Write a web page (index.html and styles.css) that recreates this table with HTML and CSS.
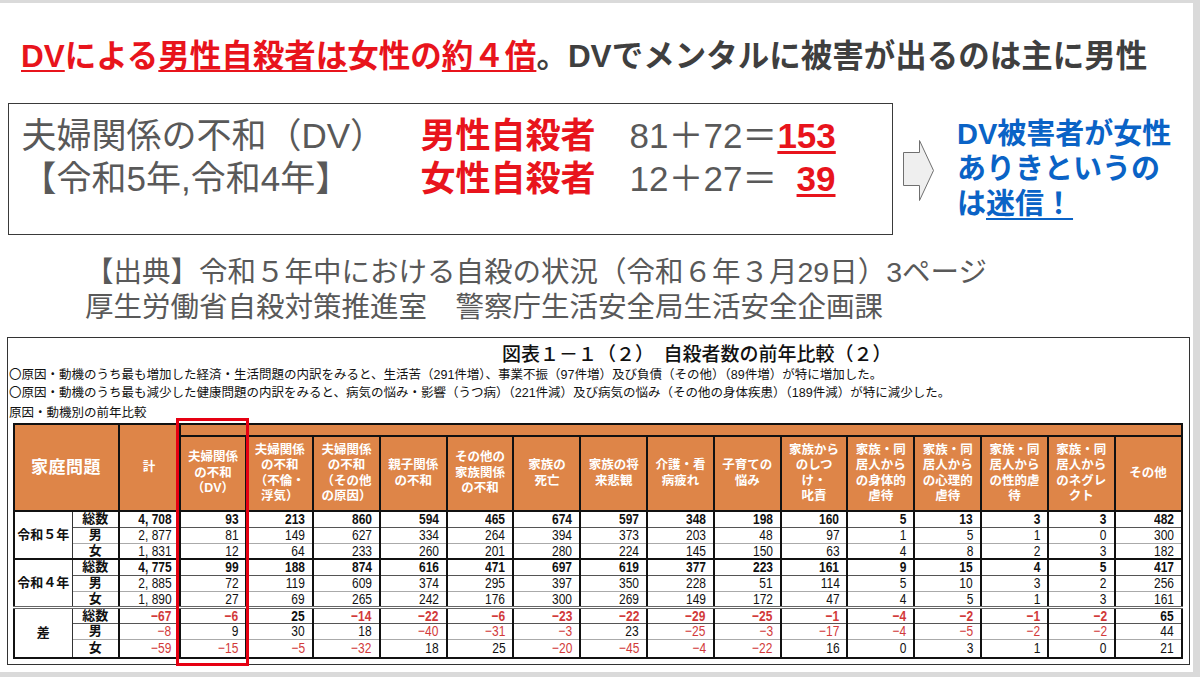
FILE: index.html
```html
<!DOCTYPE html>
<html lang="ja">
<head>
<meta charset="utf-8">
<title>DVによる男性自殺者</title>
<link rel="stylesheet" href="styles.css">
</head>
<body>
<div class="slide">
  <h1 class="headline"><span class="red u">DV</span><span class="red">による</span><span class="red u">男性自殺者は</span><span class="red">女性の</span><span class="red u">約４倍</span>。DVでメンタルに被害が出るのは主に男性</h1>

  <div class="summary">
    <div class="box">
      <div class="cat">夫婦関係の不和（DV）</div>
      <div class="lbl">男性自殺者</div>
      <div class="calc"><span>81＋72＝</span><span class="res">153</span></div>
      <div class="cat">【令和5年,令和4年】</div>
      <div class="lbl">女性自殺者</div>
      <div class="calc"><span>12＋27＝</span><span class="res">39</span></div>
    </div>
    <svg class="arrow" width="32" height="62" viewBox="0 0 32 62">
      <polygon points="0.5,12.5 16.5,12.5 16.5,0.5 30.5,30.5 16.5,60.5 16.5,45.5 0.5,45.5" fill="#efefef" stroke="#6f6f6f" stroke-width="1"/>
    </svg>
    <p class="myth">DV被害者が女性<br>ありきというの<br>は<span class="u">迷信！</span></p>
  </div>

  <div class="source">【出典】令和５年中における自殺の状況（令和６年３月29日）3ページ<br>厚生労働省自殺対策推進室　警察庁生活安全局生活安全企画課</div>

  <div class="figure">
    <div class="fig-title">図表１－１（２）　自殺者数の前年比較（２）</div>
    <p class="note">〇原因・動機のうち最も増加した経済・生活問題の内訳をみると、生活苦（291件増）、事業不振（97件増）及び負債（その他）（89件増）が特に増加した。</p>
    <p class="note">〇原因・動機のうち最も減少した健康問題の内訳をみると、病気の悩み・影響（うつ病）（221件減）及び病気の悩み（その他の身体疾患）（189件減）が特に減少した。</p>
    <p class="note sub">原因・動機別の前年比較</p>
    <div class="table-wrap">
      <table class="data">
        <colgroup>
          <col class="c-year"><col class="c-kind"><col class="c-total">
          <col class="c-n"><col class="c-n"><col class="c-n"><col class="c-n"><col class="c-n">
          <col class="c-n"><col class="c-n"><col class="c-n"><col class="c-n"><col class="c-n">
          <col class="c-n"><col class="c-n"><col class="c-n"><col class="c-n"><col class="c-n">
        </colgroup>
        <thead>
          <tr class="h1">
            <th class="big" colspan="2" rowspan="2">家庭問題</th>
            <th rowspan="2">計</th>
            <th class="band" colspan="15"></th>
          </tr>
          <tr class="h2">
            <th>夫婦関係<br>の不和<br>（DV）</th>
            <th>夫婦関係<br>の不和<br>（不倫・<br>浮気）</th>
            <th>夫婦関係<br>の不和<br>（その他<br>の原因）</th>
            <th>親子関係<br>の不和</th>
            <th>その他の<br>家族関係<br>の不和</th>
            <th>家族の<br>死亡</th>
            <th>家族の将<br>来悲観</th>
            <th>介護・看<br>病疲れ</th>
            <th>子育ての<br>悩み</th>
            <th>家族から<br>のしつ<br>け・<br>叱責</th>
            <th>家族・同<br>居人から<br>の身体的<br>虐待</th>
            <th>家族・同<br>居人から<br>の心理的<br>虐待</th>
            <th>家族・同<br>居人から<br>の性的虐<br>待</th>
            <th>家族・同<br>居人から<br>のネグレ<br>クト</th>
            <th>その他</th>
          </tr>
        </thead>
        <tbody>
          <tr class="tot first">
            <td class="year" rowspan="3">令和５年</td><td class="kind">総数</td>
            <td><span>4, 708</span></td><td><span>93</span></td><td><span>213</span></td><td><span>860</span></td><td><span>594</span></td><td><span>465</span></td><td><span>674</span></td><td><span>597</span></td><td><span>348</span></td><td><span>198</span></td><td><span>160</span></td><td><span>5</span></td><td><span>13</span></td><td><span>3</span></td><td><span>3</span></td><td><span>482</span></td>
          </tr>
          <tr class="m">
            <td class="kind">男</td>
            <td><span>2, 877</span></td><td><span>81</span></td><td><span>149</span></td><td><span>627</span></td><td><span>334</span></td><td><span>264</span></td><td><span>394</span></td><td><span>373</span></td><td><span>203</span></td><td><span>48</span></td><td><span>97</span></td><td><span>1</span></td><td><span>5</span></td><td><span>1</span></td><td><span>0</span></td><td><span>300</span></td>
          </tr>
          <tr class="f">
            <td class="kind">女</td>
            <td><span>1, 831</span></td><td><span>12</span></td><td><span>64</span></td><td><span>233</span></td><td><span>260</span></td><td><span>201</span></td><td><span>280</span></td><td><span>224</span></td><td><span>145</span></td><td><span>150</span></td><td><span>63</span></td><td><span>4</span></td><td><span>8</span></td><td><span>2</span></td><td><span>3</span></td><td><span>182</span></td>
          </tr>
          <tr class="tot">
            <td class="year" rowspan="3">令和４年</td><td class="kind">総数</td>
            <td><span>4, 775</span></td><td><span>99</span></td><td><span>188</span></td><td><span>874</span></td><td><span>616</span></td><td><span>471</span></td><td><span>697</span></td><td><span>619</span></td><td><span>377</span></td><td><span>223</span></td><td><span>161</span></td><td><span>9</span></td><td><span>15</span></td><td><span>4</span></td><td><span>5</span></td><td><span>417</span></td>
          </tr>
          <tr class="m">
            <td class="kind">男</td>
            <td><span>2, 885</span></td><td><span>72</span></td><td><span>119</span></td><td><span>609</span></td><td><span>374</span></td><td><span>295</span></td><td><span>397</span></td><td><span>350</span></td><td><span>228</span></td><td><span>51</span></td><td><span>114</span></td><td><span>5</span></td><td><span>10</span></td><td><span>3</span></td><td><span>2</span></td><td><span>256</span></td>
          </tr>
          <tr class="f">
            <td class="kind">女</td>
            <td><span>1, 890</span></td><td><span>27</span></td><td><span>69</span></td><td><span>265</span></td><td><span>242</span></td><td><span>176</span></td><td><span>300</span></td><td><span>269</span></td><td><span>149</span></td><td><span>172</span></td><td><span>47</span></td><td><span>4</span></td><td><span>5</span></td><td><span>1</span></td><td><span>3</span></td><td><span>161</span></td>
          </tr>
          <tr class="tot diff">
            <td class="year" rowspan="3">差</td><td class="kind">総数</td>
            <td class="neg"><span>−67</span></td><td class="neg"><span>−6</span></td><td><span>25</span></td><td class="neg"><span>−14</span></td><td class="neg"><span>−22</span></td><td class="neg"><span>−6</span></td><td class="neg"><span>−23</span></td><td class="neg"><span>−22</span></td><td class="neg"><span>−29</span></td><td class="neg"><span>−25</span></td><td class="neg"><span>−1</span></td><td class="neg"><span>−4</span></td><td class="neg"><span>−2</span></td><td class="neg"><span>−1</span></td><td class="neg"><span>−2</span></td><td><span>65</span></td>
          </tr>
          <tr class="m">
            <td class="kind">男</td>
            <td class="neg"><span>−8</span></td><td><span>9</span></td><td><span>30</span></td><td><span>18</span></td><td class="neg"><span>−40</span></td><td class="neg"><span>−31</span></td><td class="neg"><span>−3</span></td><td><span>23</span></td><td class="neg"><span>−25</span></td><td class="neg"><span>−3</span></td><td class="neg"><span>−17</span></td><td class="neg"><span>−4</span></td><td class="neg"><span>−5</span></td><td class="neg"><span>−2</span></td><td class="neg"><span>−2</span></td><td><span>44</span></td>
          </tr>
          <tr class="f last">
            <td class="kind">女</td>
            <td class="neg"><span>−59</span></td><td class="neg"><span>−15</span></td><td class="neg"><span>−5</span></td><td class="neg"><span>−32</span></td><td><span>18</span></td><td><span>25</span></td><td class="neg"><span>−20</span></td><td class="neg"><span>−45</span></td><td class="neg"><span>−4</span></td><td class="neg"><span>−22</span></td><td><span>16</span></td><td><span>0</span></td><td><span>3</span></td><td><span>1</span></td><td><span>0</span></td><td><span>21</span></td>
          </tr>
        </tbody>
      </table>
      <div class="highlight"></div>
    </div>
  </div>
</div>
</body>
</html>
```

FILE: styles.css
```css
* { box-sizing: border-box; }

html, body {
  margin: 0;
  padding: 0;
}

body {
  background: #dadada;
  padding-top: 3px;
  width: 1200px;
  height: 677px;
  overflow: hidden;
  font-family: "Liberation Sans", "Noto Sans CJK JP", sans-serif;
}

.slide {
  width: 1193px;
  height: 669px;
  background: #ffffff;
  display: flex;
  flex-direction: column;
  align-items: flex-start;
}

/* ---------- headline ---------- */
.headline {
  margin: 33px 0 0 21px;
  font-size: 31.5px;
  line-height: 40px;
  font-weight: bold;
  color: #3f3f3f;
  white-space: nowrap;
}

.red { color: #e8141c; }

.u {
  text-decoration: underline;
  text-decoration-thickness: 2px;
  text-underline-offset: 3px;
}

/* ---------- summary box ---------- */
.summary {
  margin: 27px 0 0 8px;
  display: flex;
  align-items: flex-start;
}

.box {
  width: 885px;
  height: 132px;
  border: 1.5px solid #3a3a3a;
  padding: 10px 0 0 12.5px;
  display: grid;
  grid-template-columns: 399px 209px 206px;
  grid-auto-rows: 43px;
  font-size: 35px;
  line-height: 43px;
  color: #595959;
  white-space: nowrap;
}

.lbl {
  color: #e8141c;
  font-weight: bold;
}

.calc {
  display: flex;
  justify-content: space-between;
}

.res {
  color: #e8141c;
  font-weight: bold;
  text-decoration: underline;
  text-decoration-thickness: 3px;
  text-underline-offset: 3px;
}

.arrow {
  margin: 37px 0 0 10px;
  flex: none;
}

.myth {
  margin: 14px 0 0 22px;
  font-size: 29px;
  line-height: 35px;
  font-weight: bold;
  color: #0a63c6;
  white-space: nowrap;
}

.myth .u {
  text-decoration-thickness: 2px;
  text-underline-offset: 4px;
}

/* ---------- source ---------- */
.source {
  margin: 20px 0 0 85px;
  font-size: 28.5px;
  line-height: 35px;
  color: #595959;
  white-space: nowrap;
}

/* ---------- figure ---------- */
.figure {
  margin: 12px 0 0 7px;
  width: 1183px;
  height: 328px;
  border: 1.5px solid #333;
  color: #111;
}

.fig-title {
  margin: 6px 0 0 494px;
  font-size: 19px;
  line-height: 22px;
  font-weight: 500;
  white-space: nowrap;
}

.note {
  margin: 0 0 0 1px;
  font-size: 12.5px;
  line-height: 18px;
  white-space: nowrap;
}

.note.sub { margin-top: 2px; }

.table-wrap {
  position: relative;
  margin: 1px 0 0 4.5px;
  width: 1168px;
}

.data {
  border-collapse: collapse;
  table-layout: fixed;
  width: 1168px;
  border: 2px solid #111;
}

.c-year { width: 59px; }
.c-kind { width: 46px; }
.c-total { width: 61px; }
.c-n { width: 66.8px; }

.data th {
  background: #de8548;
  color: #ffffff;
  font-weight: bold;
  font-size: 12.5px;
  line-height: 15.5px;
  border: 2px solid #111;
  padding: 0;
  text-align: center;
  vertical-align: middle;
}

.data th.big {
  font-size: 17px;
  letter-spacing: 0.5px;
}

.data th.band {
  height: 12px;
  border-top: 2px solid #111;
  border-right: 2px solid #111;
}

.data .h2 th { height: 75px; }

.data td {
  height: 16px;
  padding: 0 7px 0 0;
  font-size: 15px;
  line-height: 14px;
  text-align: right;
  border-left: 2px solid #111;
  border-right: 2px solid #111;
  color: #111;
  white-space: nowrap;
}

.data td > span {
  display: inline-block;
  transform: scaleX(0.8);
  transform-origin: 100% 50%;
}

.data td.year,
.data td.kind {
  font-weight: bold;
  font-size: 13px;
  text-align: center;
  padding: 0;
}

.data td.year {
  border-right: 1px solid #333;
  border-top: 2px solid #111;
}

.data td.kind { border-left: 1px solid #333; }

.data tr.tot td { font-weight: bold; border-top: 2px solid #111; }
.data tr.first td { border-top: 2px solid #111; }
.data tr.m td { border-top: 1.5px solid #555; }
.data tr.f td { border-top: 1px solid #aaa; }
.data tr.diff td { border-top: 3px double #666; }
.data tr.last td { height: 19px; }

.data td.neg {
  color: #d23a3a;
  font-weight: normal;
}

.highlight {
  position: absolute;
  left: 163px;
  top: -5px;
  width: 73px;
  height: 248px;
  border: 3px solid #e60012;
  pointer-events: none;
}
```
